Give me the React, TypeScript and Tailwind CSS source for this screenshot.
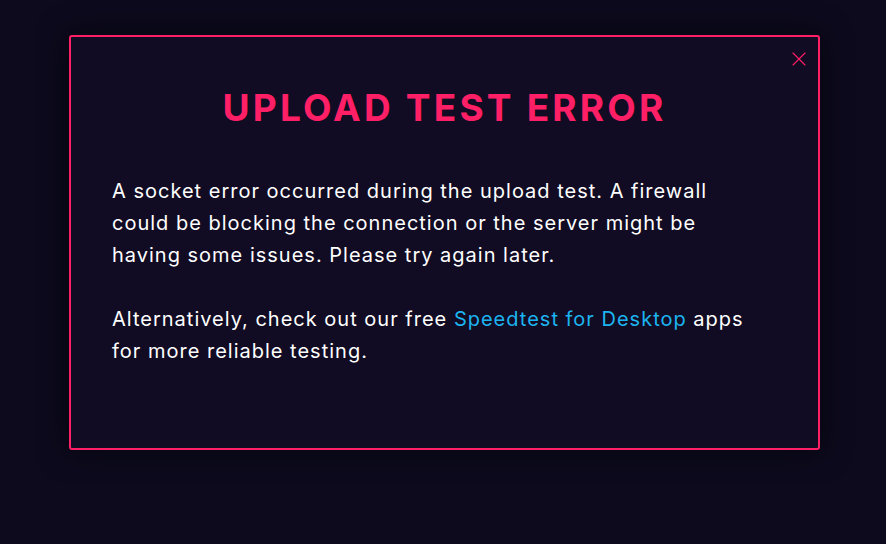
import { X } from "lucide-react";

const App: React.FC = () => {
  return (
    <div className="min-h-[544px] w-full bg-[#0c0a1c] pt-[35px] font-['Inter',sans-serif]">
      <div className="relative ml-[69px] h-[415px] w-[751px] rounded-[3px] border-2 border-[#ff1f66] bg-[#110c23] px-[41px] pt-[48px] shadow-[0_0_30px_rgba(0,0,0,0.5)]">
        <button className="absolute right-[7px] top-[10px] text-[#ff1f66]">
          <X size={24} strokeWidth={1.1} />
        </button>
        <h1 className="text-center text-[37px] font-bold leading-[46px] tracking-[3.2px] text-[#ff1f66]">
          UPLOAD TEST ERROR
        </h1>
        <div className="mt-[44px] text-[20px] leading-[32px] tracking-[1px] text-white">
          <p>
            A socket error occurred during the upload test. A firewall
            <br />
            could be blocking the connection or the server might be
            <br />
            having some issues. Please try again later.
          </p>
          <p className="mt-[32px]">
            Alternatively, check out our free{" "}
            <a className="text-[#1cb4f0]">Speedtest for Desktop</a> apps
            <br />
            for more reliable testing.
          </p>
        </div>
      </div>
    </div>
  );
};

export default App;
